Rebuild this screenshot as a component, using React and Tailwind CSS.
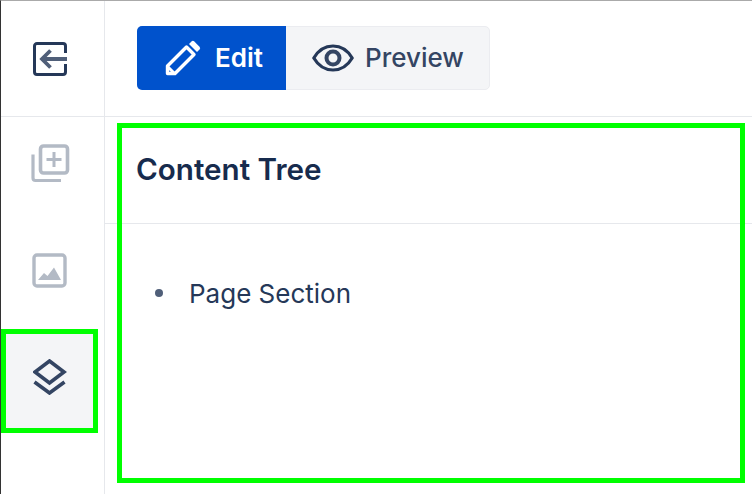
import React from 'react';

const font = { fontFamily: 'Inter, "Liberation Sans", sans-serif' };

function ExitIcon() {
  return (
    <svg width="34" height="34" viewBox="0 0 34 34" fill="none">
      <path d="M32.500 11V4a2.500 2.500 0 0 0-2.500-2.500H4A2.500 2.500 0 0 0 1.500 4v26A2.500 2.500 0 0 0 4 32.500h26a2.500 2.500 0 0 0 2.500-2.500v-8" stroke="#253858" strokeWidth="3" />
      <path d="M34 17H10M17.500 8.500 9 17l8.500 8.500" stroke="#505F79" strokeWidth="3.800" />
    </svg>
  );
}

function PencilIcon() {
  return (
    <svg width="36" height="36" viewBox="0 0 36 36" fill="none">
      <path d="M2.500 26 21.500 7 29 14.500 10 33.500H2.500Z" stroke="#fff" strokeWidth="3.400" strokeLinejoin="round" />
      <path d="M2.500 26.500 9.500 33.500" stroke="#fff" strokeWidth="3" />
      <path d="M26.500 1.500a2 2 0 0 1 2.800 0l5.200 5.200a2 2 0 0 1 0 2.800l-2.500 2.500-8-8Z" fill="#fff" />
    </svg>
  );
}

function EyeIcon() {
  return (
    <svg width="42" height="28" viewBox="0 0 42 28" fill="none">
      <path d="M1.800 14C6.500 6 13 2 21 2s14.500 4 19.200 12C35.500 22 29 26 21 26S6.500 22 1.800 14Z" stroke="#253858" strokeWidth="3.200" strokeLinejoin="round" />
      <circle cx="21" cy="14" r="6.500" stroke="#344563" strokeWidth="4" />
    </svg>
  );
}

function AddIcon() {
  return (
    <svg width="40" height="40" viewBox="0 0 40 40" fill="none" stroke="#B3BAC5">
      <rect x="10.500" y="2" width="27" height="27" rx="3" strokeWidth="3.600" />
      <path d="M24 8v15M16.500 15.500h15" strokeWidth="3" />
      <path d="M3 10.500V34a2.500 2.500 0 0 0 2.500 2.500H31" strokeWidth="3.200" />
    </svg>
  );
}

function ImageIcon() {
  return (
    <svg width="36" height="36" viewBox="0 0 36 36" fill="none">
      <rect x="2" y="2" width="31" height="31" rx="3" stroke="#B3BAC5" strokeWidth="3.400" />
      <path d="M6 27 12 20l3.500 3L22 14.500 29 27Z" fill="#B3BAC5" />
    </svg>
  );
}

function LayersIcon() {
  return (
    <svg width="34" height="36" viewBox="0 0 34 36" fill="none" stroke="#344563" strokeWidth="3.600">
      <path d="M16.500 2 31 13 16.500 24 2 13Z" />
      <path d="M1.500 23 16.500 34l15-11" />
    </svg>
  );
}

export default function App() {
  return (
    <div className="relative w-[752px] h-[494px] overflow-hidden bg-white border-t border-l border-t-[#aaaaaa] border-l-[#333333] flex" style={font}>
      {/* Left icon rail */}
      <div className="w-[104px] h-full shrink-0 flex flex-col border-r border-[#e6e8ec]">
        <div className="h-[116px] shrink-0 flex items-center justify-center border-b border-[#e6e8ec] pr-[6px]">
          <ExitIcon />
        </div>
        <div className="h-[93px] flex items-center justify-center pr-[5px] pt-[1px]">
          <AddIcon />
        </div>
        <div className="h-[119px] flex items-center justify-center pr-[6px] pt-[3px]">
          <ImageIcon />
        </div>
        <div className="w-[97px] h-[104px] flex items-center justify-center bg-[#f4f5f7] pb-[8px]">
          <LayersIcon />
        </div>
      </div>

      <div className="flex-1 flex flex-col min-w-0">
        {/* Edit / Preview toggle */}
        <div className="h-[116px] shrink-0 flex items-center pl-[32px] border-b border-[#e6e8ec]">
          <div className="flex h-[64px] rounded-[5px] mt-[-2px] border border-[#ebecf0] bg-[#f4f5f7]">
            <div className="w-[149px] -m-px flex items-center gap-[14px] pl-[28px] rounded-l-[5px] bg-[#0052cc] text-white text-[26px] font-semibold">
              <PencilIcon />
              <span>Edit</span>
            </div>
            <div className="w-[204px] flex items-center gap-[11px] pl-[27px] text-[#344563] text-[26px] font-medium">
              <EyeIcon />
              <span>Preview</span>
            </div>
          </div>
        </div>

        {/* Content tree panel */}
        <div className="flex-1 flex flex-col">
          <div className="h-[107px] shrink-0 flex items-center pl-[31px] border-b border-[#e6e8ec] text-[29.6px] font-semibold text-[#172b4d]">
            <span className="mt-[-1px]">Content Tree</span>
          </div>
          <ul className="pt-[50px] pl-[50px]">
            <li className="flex items-center gap-[26px] h-[38px] text-[26px] text-[#253858]">
              <span className="w-[8px] h-[8px] rounded-full bg-[#505f79]" />
              <span>Page Section</span>
            </li>
          </ul>
        </div>
      </div>

      {/* Green annotation frames */}
      <div className="absolute left-[116px] top-[122px] w-[628px] h-[360px] border-[5px] border-[#00ff00]" />
      <div className="absolute left-0 top-[328px] w-[97px] h-[104px] border-[5px] border-[#00ff00]" />
    </div>
  );
}
